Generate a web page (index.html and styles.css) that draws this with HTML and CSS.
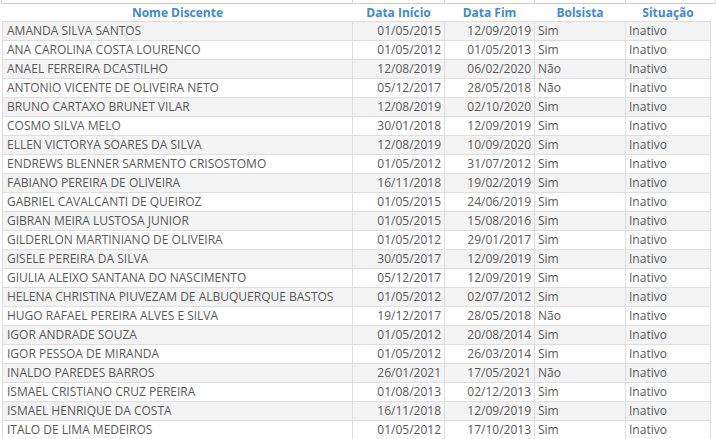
FILE: index.html
```html
<!DOCTYPE html>
<html lang="pt-BR">
<head>
  <meta charset="UTF-8">
  <title>Discentes</title>
  <link rel="stylesheet" href="styles.css">
</head>
<body>
  <div class="strip">
    <span class="s-nome"></span>
    <span class="s-ini"></span>
    <span class="s-fim"></span>
    <span class="s-bol"></span>
    <span class="s-sit"></span>
  </div>

  <table class="discentes">
    <thead>
      <tr>
        <th class="c-nome">Nome Discente</th>
        <th class="c-ini">Data Início</th>
        <th class="c-fim">Data Fim</th>
        <th class="c-bol">Bolsista</th>
        <th class="c-sit">Situação</th>
      </tr>
    </thead>
    <tbody>
      <tr><td>AMANDA SILVA SANTOS</td><td class="date">01/05/2015</td><td class="date">12/09/2019</td><td>Sim</td><td>Inativo</td></tr>
      <tr><td>ANA CAROLINA COSTA LOURENCO</td><td class="date">01/05/2012</td><td class="date">01/05/2013</td><td>Sim</td><td>Inativo</td></tr>
      <tr><td>ANAEL FERREIRA DCASTILHO</td><td class="date">12/08/2019</td><td class="date">06/02/2020</td><td>Não</td><td>Inativo</td></tr>
      <tr><td>ANTONIO VICENTE DE OLIVEIRA NETO</td><td class="date">05/12/2017</td><td class="date">28/05/2018</td><td>Não</td><td>Inativo</td></tr>
      <tr><td>BRUNO CARTAXO BRUNET VILAR</td><td class="date">12/08/2019</td><td class="date">02/10/2020</td><td>Sim</td><td>Inativo</td></tr>
      <tr><td>COSMO SILVA MELO</td><td class="date">30/01/2018</td><td class="date">12/09/2019</td><td>Sim</td><td>Inativo</td></tr>
      <tr><td>ELLEN VICTORYA SOARES DA SILVA</td><td class="date">12/08/2019</td><td class="date">10/09/2020</td><td>Sim</td><td>Inativo</td></tr>
      <tr><td>ENDREWS BLENNER SARMENTO CRISOSTOMO</td><td class="date">01/05/2012</td><td class="date">31/07/2012</td><td>Sim</td><td>Inativo</td></tr>
      <tr><td>FABIANO PEREIRA DE OLIVEIRA</td><td class="date">16/11/2018</td><td class="date">19/02/2019</td><td>Sim</td><td>Inativo</td></tr>
      <tr><td>GABRIEL CAVALCANTI DE QUEIROZ</td><td class="date">01/05/2015</td><td class="date">24/06/2019</td><td>Sim</td><td>Inativo</td></tr>
      <tr><td>GIBRAN MEIRA LUSTOSA JUNIOR</td><td class="date">01/05/2015</td><td class="date">15/08/2016</td><td>Sim</td><td>Inativo</td></tr>
      <tr><td>GILDERLON MARTINIANO DE OLIVEIRA</td><td class="date">01/05/2012</td><td class="date">29/01/2017</td><td>Sim</td><td>Inativo</td></tr>
      <tr><td>GISELE PEREIRA DA SILVA</td><td class="date">30/05/2017</td><td class="date">12/09/2019</td><td>Sim</td><td>Inativo</td></tr>
      <tr><td>GIULIA ALEIXO SANTANA DO NASCIMENTO</td><td class="date">05/12/2017</td><td class="date">12/09/2019</td><td>Sim</td><td>Inativo</td></tr>
      <tr><td>HELENA CHRISTINA PIUVEZAM DE ALBUQUERQUE BASTOS</td><td class="date">01/05/2012</td><td class="date">02/07/2012</td><td>Sim</td><td>Inativo</td></tr>
      <tr><td>HUGO RAFAEL PEREIRA ALVES E SILVA</td><td class="date">19/12/2017</td><td class="date">28/05/2018</td><td>Não</td><td>Inativo</td></tr>
      <tr><td>IGOR ANDRADE SOUZA</td><td class="date">01/05/2012</td><td class="date">20/08/2014</td><td>Sim</td><td>Inativo</td></tr>
      <tr><td>IGOR PESSOA DE MIRANDA</td><td class="date">01/05/2012</td><td class="date">26/03/2014</td><td>Sim</td><td>Inativo</td></tr>
      <tr><td>INALDO PAREDES BARROS</td><td class="date">26/01/2021</td><td class="date">17/05/2021</td><td>Não</td><td>Inativo</td></tr>
      <tr><td>ISMAEL CRISTIANO CRUZ PEREIRA</td><td class="date">01/08/2013</td><td class="date">02/12/2013</td><td>Sim</td><td>Inativo</td></tr>
      <tr><td>ISMAEL HENRIQUE DA COSTA</td><td class="date">16/11/2018</td><td class="date">12/09/2019</td><td>Sim</td><td>Inativo</td></tr>
      <tr><td>ITALO DE LIMA MEDEIROS</td><td class="date">01/05/2012</td><td class="date">17/10/2013</td><td>Sim</td><td>Inativo</td></tr>
    </tbody>
  </table>
</body>
</html>
```

FILE: styles.css
```css
body {
  margin: 0;
  padding: 0;
  background-color: #fff;
  font-family: "Open Sans", Arial, sans-serif;
  font-size: 12px;
  color: #595959;
  overflow: hidden;
}

/* bottom of the previous block, cut off at the top */
.strip {
  display: flex;
  height: 3px;
  margin-left: 1px;
  border-left: 1px solid #d6d6d6;
  border-bottom: 1px solid #cfcfcf;
}

.strip span {
  box-sizing: border-box;
  border-right: 1px solid #d6d6d6;
}

.s-nome { width: 351px; }
.s-ini { width: 92px; }
.s-fim { width: 90px; }
.s-bol { width: 91px; }
.s-sit { width: 90px; }

.discentes {
  border-collapse: separate;
  border-spacing: 0;
  table-layout: fixed;
  width: 709px;
  margin-left: 2px;
}

.discentes th,
.discentes td {
  box-sizing: border-box;
  padding: 0;
  white-space: nowrap;
  overflow: hidden;
}

.discentes th {
  height: 18px;
  line-height: 17px;
  font-weight: 700;
  color: #4189d2;
  text-align: center;
  border-bottom: 1px solid #dcdcdc;
  border-right: 1px solid transparent;
}

.discentes th.c-nome { border-left: 1px solid transparent; }

.c-nome { width: 351px; }
.c-ini { width: 92px; }
.c-fim { width: 90px; }
.c-bol { width: 91px; }
.c-sit { width: 85px; }

.discentes td {
  height: 19px;
  line-height: 18px;
  padding-left: 3px;
  border-right: 1px solid #dedede;
  border-bottom: 1px solid #dedede;
}

.discentes td:first-child {
  border-left: 1px solid #dedede;
  padding-left: 4px;
}

.discentes td.date {
  text-align: right;
  padding-left: 0;
  padding-right: 3px;
}

.discentes tbody tr:nth-child(odd) td {
  background-color: #f3f3f3;
}
```
